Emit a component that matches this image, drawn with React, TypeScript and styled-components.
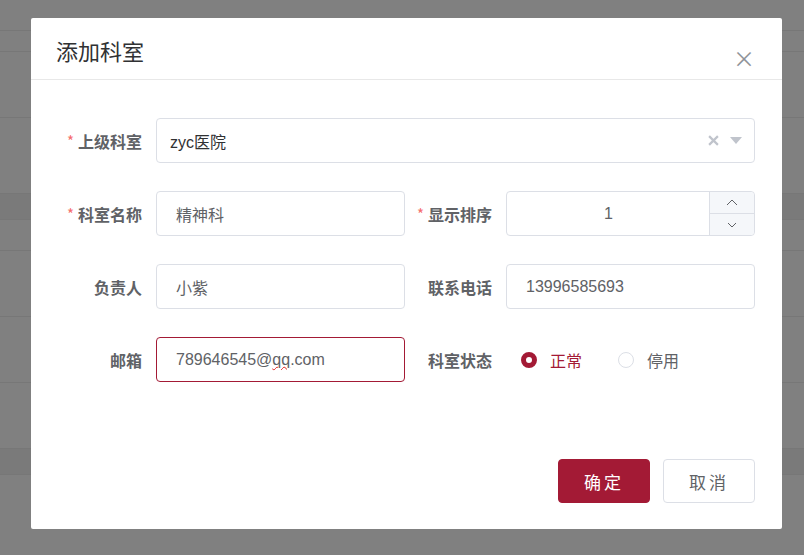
import React from "react";
import styled, { createGlobalStyle } from "styled-components";

const G = createGlobalStyle`
  body { margin:0; font-family: "Noto Sans CJK SC", "Liberation Sans", sans-serif; }
`;
const Page = styled.div`
  width:804px; height:555px; background:#808080; position:relative; overflow:hidden;
  display:flex; flex-direction:column;
`;
const BgRow = styled.div<{ h: number; dark?: boolean }>`
  height:${p => p.h}px; border-bottom:1px solid #777; background:${p => p.dark ? "#7a7a7a" : "#808080"};
`;
const Dialog = styled.div`
  position:absolute; left:31px; top:18px; width:751px; height:511px; background:#fff;
  border-radius:2px; display:flex; flex-direction:column;
`;
const Header = styled.div`
  height:61px; border-bottom:1px solid #e8e8e8; display:flex; align-items:center;
  padding:0 27px 0 25px; justify-content:space-between;
`;
const Title = styled.div` font-size:22px; color:#303133; margin-top:2px; `;
const Close = styled.div` color:#909399; font-size:22px; margin-top:16px; line-height:1; `;
const Form = styled.div`
  padding:38px 27px 0 31px; display:grid; grid-template-columns:1fr 1fr; column-gap:7px; row-gap:28px;
`;
const Item = styled.div<{ full?: boolean }>`
  display:flex; align-items:center; ${p => p.full ? "grid-column:1 / span 2;" : ""}
`;
const Label = styled.div`
  width:80px; margin-right:14px; text-align:right; font-weight:bold; font-size:16px; color:#606266;
  white-space:nowrap; display:flex; justify-content:flex-end; align-items:center;
`;
const Star = styled.span` color:#f56c6c; font-weight:normal; margin-right:4px; font-size:15px; `;
const Input = styled.div<{ focus?: boolean; center?: boolean }>`
  flex:1; height:43px; border:1px solid ${p => p.focus ? "#a31a35" : "#dcdfe6"}; border-radius:4px;
  display:flex; align-items:center; padding:0 ${p => p.center ? 0 : 19}px; font-size:16px; color:#606266;
  position:relative; font-family:"Liberation Sans","Noto Sans CJK SC",sans-serif;
  ${p => p.center ? "justify-content:center;" : ""}
`;
const Sel = styled(Input)` padding-left:13px; color:#303133; justify-content:space-between; padding-right:12px; `;
const Icons = styled.div` display:flex; gap:11px; align-items:center; color:#c0c4cc; `;
const Spin = styled.div`
  position:absolute; right:0; top:0; bottom:0; width:44px; border-left:1px solid #dcdfe6;
  display:flex; flex-direction:column; background:#f5f7fa; border-radius:0 4px 4px 0;
`;
const SpinBtn = styled.div<{ top?: boolean }>`
  flex:1; display:flex; align-items:center; justify-content:center; color:#606266;
  ${p => p.top ? "border-bottom:1px solid #dcdfe6;" : ""}
`;
const Radios = styled.div` display:flex; align-items:center; gap:36px; padding-left:15px; `;
const Radio = styled.div<{ on?: boolean }>`
  display:flex; align-items:center; gap:13px; font-size:16px; color:${p => p.on ? "#a31a35" : "#606266"};
`;
const Dot = styled.span<{ on?: boolean }>`
  width:16px; height:16px; border-radius:50%; box-sizing:border-box;
  border:${p => p.on ? "5px solid #a31a35" : "1px solid #dcdfe6"}; background:#fff;
`;
const Squig = styled.span` text-decoration: underline wavy #e02020; text-decoration-thickness:1px; `;
const Footer = styled.div` margin-top:auto; padding:0 27px 26px; display:flex; justify-content:flex-end; gap:13px; `;
const Btn = styled.button<{ primary?: boolean }>`
  width:92px; height:44px; border-radius:4px; font-size:17px; letter-spacing:3px; cursor:pointer;
  font-family:"Noto Sans CJK SC",sans-serif;
  background:${p => p.primary ? "#a31a35" : "#fff"}; color:${p => p.primary ? "#fff" : "#606266"};
  border:1px solid ${p => p.primary ? "#a31a35" : "#dcdfe6"};
`;

export default function App() {
  return (
    <Page>
      <G />
      <BgRow h={30} /><BgRow h={20} /><BgRow h={65} /><BgRow h={75} /><BgRow h={25} dark />
      <BgRow h={30} /><BgRow h={65} /><BgRow h={65} /><BgRow h={65} /><BgRow h={25} dark />
      <Dialog>
        <Header><Title>添加科室</Title><Close>×</Close></Header>
        <Form>
          <Item full>
            <Label><Star>*</Star>上级科室</Label>
            <Sel>zyc医院
              <Icons>
                <svg width="11" height="11" viewBox="0 0 10 10"><path d="M1 1L9 9M9 1L1 9" stroke="#c0c4cc" strokeWidth="2"/></svg>
                <svg width="12" height="7" viewBox="0 0 12 7"><path d="M0 0H12L6 7Z" fill="#c0c4cc"/></svg>
              </Icons>
            </Sel>
          </Item>
          <Item><Label><Star>*</Star>科室名称</Label><Input>精神科</Input></Item>
          <Item><Label><Star>*</Star>显示排序</Label>
            <Input center><span style={{ marginRight: 44 }}>1</span>
              <Spin>
                <SpinBtn top><svg width="12" height="7" viewBox="0 0 12 7"><path d="M1 6L6 1L11 6" fill="none" stroke="#606266"/></svg></SpinBtn>
                <SpinBtn><svg width="10" height="6" viewBox="0 0 10 6"><path d="M1 1L5 5L9 1" fill="none" stroke="#606266"/></svg></SpinBtn>
              </Spin>
            </Input>
          </Item>
          <Item><Label>负责人</Label><Input>小紫</Input></Item>
          <Item><Label>联系电话</Label><Input>13996585693</Input></Item>
          <Item><Label>邮箱</Label><Input focus>789646545@<Squig>qq</Squig>.com</Input></Item>
          <Item><Label>科室状态</Label>
            <Radios>
              <Radio on><Dot on />正常</Radio>
              <Radio><Dot />停用</Radio>
            </Radios>
          </Item>
        </Form>
        <Footer><Btn primary>确定</Btn><Btn>取消</Btn></Footer>
      </Dialog>
    </Page>
  );
}
